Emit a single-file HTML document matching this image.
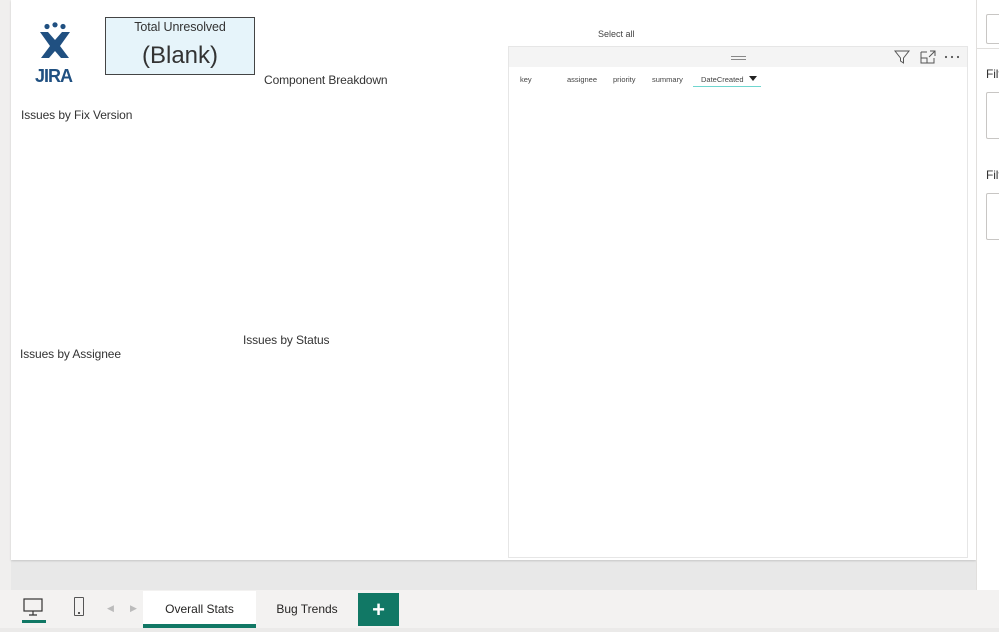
<!DOCTYPE html>
<html><head><meta charset="utf-8"><style>
*{margin:0;padding:0;box-sizing:border-box}
body{width:999px;height:632px;overflow:hidden;background:#f3f2f1;font-family:"Liberation Sans",sans-serif;color:#252423;position:relative}
.a{position:absolute}
.t{font-size:12px;color:#333;white-space:nowrap;letter-spacing:-0.1px}
.h{font-size:7.5px;color:#444;white-space:nowrap}
</style></head><body>
<div class="a" style="left:0;top:0;width:11px;height:590px;background:#f0efee"></div>
<div class="a" style="left:11px;top:560px;width:965px;height:30px;background:#e8e8e8"></div>
<div class="a" style="left:11px;top:0;width:965px;height:560px;background:#fff;box-shadow:0 1px 2px rgba(0,0,0,.15)"></div>
<div class="a" style="left:976px;top:0;width:23px;height:590px;background:#fff;border-left:1px solid #e1dfdd"></div>
<div class="a" style="left:986px;top:14px;width:20px;height:30px;border:1px solid #c8c6c4;border-radius:2px"></div>
<div class="a" style="left:977px;top:48px;width:22px;height:1px;background:#e1dfdd"></div>
<div class="a t" style="left:986px;top:67px">Filt</div>
<div class="a" style="left:986px;top:92px;width:20px;height:47px;border:1px solid #c8c6c4;border-radius:2px"></div>
<div class="a t" style="left:986px;top:168px">Filt</div>
<div class="a" style="left:986px;top:193px;width:20px;height:47px;border:1px solid #c8c6c4;border-radius:2px"></div>

<!-- JIRA logo -->
<svg class="a" style="left:34px;top:22px" width="44" height="64" viewBox="0 0 44 64">
<g fill="#205081">
<circle cx="13" cy="4.5" r="2.6"/><circle cx="21" cy="2.8" r="2.6"/><circle cx="29" cy="4.5" r="2.6"/>
<path d="M6 10 L14 10 L21 18 L28 10 L36 10 L26 24 L35 36 L27 36 L21 29 L15 36 L7 36 L16 24 Z"/>
<text x="1" y="60" font-family="Liberation Sans" font-weight="bold" font-size="18" letter-spacing="-1">JIRA</text>
</g></svg>

<div class="a" style="left:105px;top:17px;width:150px;height:58px;background:#e6f4fa;border:1px solid #444"></div>
<div class="a t" style="left:105px;top:20px;width:150px;text-align:center;font-size:12.5px">Total Unresolved</div>
<div class="a" style="left:105px;top:42px;width:150px;text-align:center;font-size:24px;color:#333">(Blank)</div>
<div class="a t" style="left:264px;top:73px">Component Breakdown</div>
<div class="a t" style="left:21px;top:108px">Issues by Fix Version</div>
<div class="a t" style="left:20px;top:347px">Issues by Assignee</div>
<div class="a t" style="left:243px;top:333px">Issues by Status</div>
<div class="a h" style="left:598px;top:29px;font-size:9px">Select all</div>

<div class="a" style="left:508px;top:46px;width:460px;height:512px;border:1px solid #e6e6e6;background:#fff"></div>
<div class="a" style="left:509px;top:47px;width:458px;height:20px;background:#f4f4f4"></div>
<div class="a" style="left:731px;top:56px;width:15px;height:1px;background:#888"></div>
<div class="a" style="left:731px;top:59px;width:15px;height:1px;background:#888"></div>
<svg class="a" style="left:893px;top:49px" width="70" height="16" viewBox="0 0 70 16">
<path d="M2 2 H16 L10.5 9 V14 L7.5 12 V9 Z" fill="none" stroke="#555" stroke-width="1"/>
<path d="M28 3 H34 M28 3 V14 H41 V9 M28 9 H34 V14 M37 2 H42 V7 M42 2 L36 8" fill="none" stroke="#555" stroke-width="1"/>
<circle cx="53" cy="8" r="1.1" fill="#555"/><circle cx="59" cy="8" r="1.1" fill="#555"/><circle cx="65" cy="8" r="1.1" fill="#555"/>
</svg>
<div class="a h" style="left:520px;top:75px">key</div>
<div class="a h" style="left:567px;top:75px">assignee</div>
<div class="a h" style="left:613px;top:75px">priority</div>
<div class="a h" style="left:652px;top:75px">summary</div>
<div class="a h" style="left:701px;top:75px">DateCreated</div>
<div class="a" style="left:749px;top:76px;width:0;height:0;border-left:4px solid transparent;border-right:4px solid transparent;border-top:5px solid #222"></div>
<div class="a" style="left:693px;top:86px;width:68px;height:1px;background:#6fd6cf"></div>

<!-- bottom bar -->
<svg class="a" style="left:22px;top:597px" width="24" height="24" viewBox="0 0 24 24">
<rect x="2" y="2" width="18" height="12" fill="none" stroke="#333" stroke-width="1.2"/>
<path d="M11 14 V18 M7 18 H15" stroke="#333" stroke-width="1.2"/></svg>
<div class="a" style="left:22px;top:620px;width:24px;height:3px;background:#117865"></div>
<div class="a" style="left:74px;top:597px;width:10px;height:19px;border:1px solid #555;border-radius:1px"></div>
<div class="a" style="left:78px;top:612px;width:2px;height:2px;background:#555"></div>
<div class="a" style="left:107px;top:603px;font-size:9px;color:#bbb">&#9664;</div>
<div class="a" style="left:130px;top:603px;font-size:9px;color:#bbb">&#9654;</div>
<div class="a" style="left:143px;top:591px;width:113px;height:37px;background:#fff"></div>
<div class="a" style="left:143px;top:624px;width:113px;height:4px;background:#117865"></div>
<div class="a" style="left:143px;top:602px;width:113px;text-align:center;font-size:12px;color:#252423">Overall Stats</div>
<div class="a" style="left:264px;top:602px;width:86px;text-align:center;font-size:12px;color:#252423">Bug Trends</div>
<div class="a" style="left:358px;top:593px;width:41px;height:33px;background:#117865;color:#fff;font-size:22px;font-weight:bold;text-align:center;line-height:33px">+</div>
<div class="a" style="left:0;top:628px;width:999px;height:4px;background:#ebeae9"></div>
</body></html>
